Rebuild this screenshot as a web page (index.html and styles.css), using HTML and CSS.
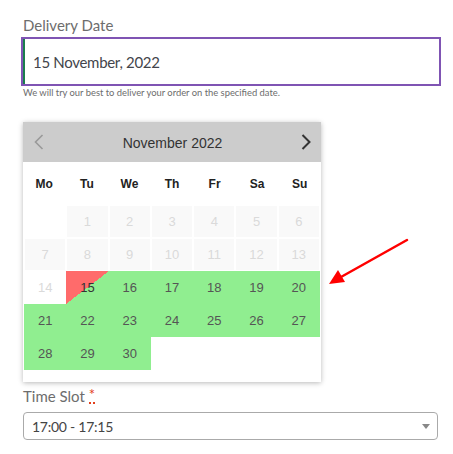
FILE: index.html
```html
<!DOCTYPE html>
<html>
<head>
<meta charset="utf-8">
<link rel="stylesheet" href="styles.css">
</head>
<body>
<div class="form">
  <label class="label">Delivery Date</label>
  <div class="date-input">15 November, 2022</div>
  <p class="hint">We will try our best to deliver your order on the specified date.</p>

  <div class="calendar">
    <div class="cal-head">
      <svg class="nav prev" width="10" height="16" viewBox="0 0 10 16"><path d="M8.5 1 L1.5 8 L8.5 15" fill="none" stroke="#999" stroke-width="1.6"/></svg>
      <span class="cal-title">November 2022</span>
      <svg class="nav next" width="10" height="16" viewBox="0 0 10 16"><path d="M1.5 1 L8.5 8 L1.5 15" fill="none" stroke="#333" stroke-width="2"/></svg>
    </div>
    <div class="cal-days">
      <span>Mo</span><span>Tu</span><span>We</span><span>Th</span><span>Fr</span><span>Sa</span><span>Su</span>
    </div>
    <div class="cal-grid">
      <span class="cell empty"></span>
      <span class="cell off">1</span><span class="cell off">2</span><span class="cell off">3</span><span class="cell off">4</span><span class="cell off">5</span><span class="cell off">6</span>
      <span class="cell off">7</span><span class="cell off">8</span><span class="cell off">9</span><span class="cell off">10</span><span class="cell off">11</span><span class="cell off">12</span><span class="cell off">13</span>
      <span class="cell past">14</span>
      <span class="cell today">15</span><span class="cell on">16</span><span class="cell on">17</span><span class="cell on">18</span><span class="cell on">19</span><span class="cell on">20</span>
      <span class="cell on">21</span><span class="cell on">22</span><span class="cell on">23</span><span class="cell on">24</span><span class="cell on">25</span><span class="cell on">26</span><span class="cell on">27</span>
      <span class="cell on">28</span><span class="cell on">29</span><span class="cell on">30</span>
      <span class="cell blank"></span><span class="cell blank"></span><span class="cell blank"></span><span class="cell blank"></span>
    </div>
  </div>

  <label class="label slot-label">Time Slot <abbr class="req" title="required">*</abbr></label>
  <div class="select">
    <span>17:00 - 17:15</span>
    <span class="caret"></span>
  </div>

  <svg class="pointer" width="90" height="52" viewBox="0 0 90 52">
    <line x1="80" y1="3" x2="14" y2="40" stroke="#f00" stroke-width="2.5" stroke-linecap="round"/>
    <polygon points="2,47 11,33 18,45" fill="#f00"/>
  </svg>
</div>
</body>
</html>
```

FILE: styles.css
```css
html, body {
  margin: 0;
  padding: 0;
  background: #fff;
}

.form {
  position: relative;
  padding: 14px 12px 0 21px;
  display: flex;
  flex-direction: column;
  align-items: flex-start;
  font-family: Lato, "Open Sans", sans-serif;
}

.label {
  display: block;
  font-size: 15px;
  line-height: 22px;
  height: 22px;
  color: #6d6d6d;
  padding-left: 2px;
}

.date-input {
  margin-top: 1px;
  box-sizing: border-box;
  width: 420px;
  height: 49px;
  border: 2px solid #7f54b3;
  box-shadow: inset 2px 0 0 #1b7d4e;
  display: flex;
  align-items: center;
  padding-left: 10px;
  font-size: 15px;
  letter-spacing: -0.3px;
  color: #43454b;
}

.hint {
  margin: 0;
  padding-left: 2px;
  font-size: 9.4px;
  line-height: 13px;
  color: #6d6d6d;
}

.calendar {
  margin: 23px 0 0 2px;
  width: 298px;
  background: #fff;
  box-shadow: 0 1px 5px rgba(0, 0, 0, 0.28);
  padding-bottom: 12px;
  font-family: "Liberation Sans", Arial, sans-serif;
}

.cal-head {
  height: 40px;
  background: #ccc;
  display: flex;
  align-items: center;
  justify-content: space-between;
  padding: 0 10px 0 11px;
}

.cal-title {
  font-size: 14px;
  color: #333;
  padding-top: 2px;
}

.nav {
  display: block;
}

.cal-days {
  display: grid;
  grid-template-columns: repeat(7, 1fr);
  height: 42px;
  align-items: center;
  text-align: center;
  font-size: 12px;
  font-weight: bold;
  color: #222;
  padding-top: 1px;
}

.cal-grid {
  display: grid;
  grid-template-columns: repeat(7, 1fr);
  grid-auto-rows: 33px;
  padding: 0 1px;
}

.cell {
  display: flex;
  align-items: center;
  justify-content: center;
  font-size: 13px;
}

.off {
  background: #f9f9f9;
  border: 1px solid #fff;
  color: #dadada;
}

.past {
  color: #dadada;
}

.on {
  background: #90ee90;
  color: #555;
}

.today {
  background: linear-gradient(to bottom right, #ff6b6b 50%, #90ee90 50%);
  color: #333;
}

.slot-label {
  margin-top: 3px;
}

.req {
  color: #e2401c;
  text-decoration: none;
  border-bottom: 2px dotted #e2401c;
  display: inline-block;
  line-height: 12px;
  height: 14px;
  vertical-align: top;
  margin-top: 3px;
}

.select {
  margin: 5px 0 0 2px;
  box-sizing: border-box;
  width: 415px;
  height: 28px;
  border: 1px solid #aaa;
  border-radius: 4px;
  display: flex;
  align-items: center;
  justify-content: space-between;
  padding: 0 7px 0 8px;
  font-size: 14px;
  letter-spacing: -0.25px;
  color: #444;
}

.caret {
  width: 0;
  height: 0;
  border-left: 4px solid transparent;
  border-right: 4px solid transparent;
  border-top: 5px solid #888;
}

.pointer {
  position: absolute;
  left: 327px;
  top: 237px;
}
```
